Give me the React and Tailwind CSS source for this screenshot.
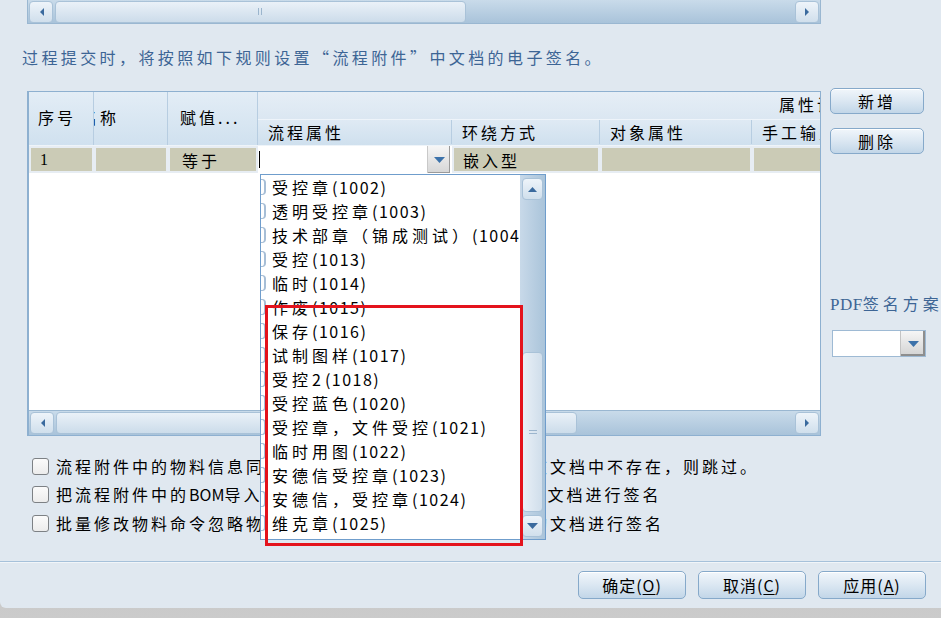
import React from "react";

const CJK = "font-['Noto_Sans_CJK_SC','Noto_Sans',sans-serif]";

const sbBtn =
  "flex shrink-0 items-center justify-center rounded-[4px] border border-[#a9c2d8] bg-linear-to-b from-[#eef4fa] to-[#d0dfec]";

function Arrow({ dir, color = "#3a6a9e" }) {
  if (dir === "left")
    return (
      <svg width="5" height="8" viewBox="0 0 5 8">
        <polygon points="5,0 5,8 1,4" fill={color} />
      </svg>
    );
  if (dir === "right")
    return (
      <svg width="5" height="8" viewBox="0 0 5 8">
        <polygon points="0,0 0,8 4,4" fill={color} />
      </svg>
    );
  if (dir === "up")
    return (
      <svg width="9" height="5" viewBox="0 0 9 5">
        <polygon points="0,5 9,5 4.5,0" fill={color} />
      </svg>
    );
  return (
    <svg width="11" height="6" viewBox="0 0 11 6">
      <polygon points="0,0 11,0 5.5,6" fill={color} />
    </svg>
  );
}

function HScroll({ thumb, className = "" }) {
  return (
    <div
      className={`flex h-[25px] items-center gap-[2px] border border-[#9ab7d1] bg-linear-to-b from-[#c9dbea] to-[#a9c3da] px-[1px] ${className}`}
    >
      <div className={`${sbBtn} h-[22px] w-[24px]`}>
        <Arrow dir="left" />
      </div>
      <div
        className={`flex h-[22px] items-center justify-center rounded-[4px] border border-[#a9c2d8] bg-linear-to-b from-[#eaf1f8] to-[#ccdcea] ${thumb}`}
      >
        <svg width="5" height="7" viewBox="0 0 5 7">
          <rect x="0" y="0" width="1" height="7" fill="#9bb5cd" />
          <rect x="3" y="0" width="1" height="7" fill="#9bb5cd" />
        </svg>
      </div>
      <div className="flex-1" />
      <div className={`${sbBtn} h-[22px] w-[24px]`}>
        <Arrow dir="right" />
      </div>
    </div>
  );
}

function Btn({ children, className = "" }) {
  return (
    <div
      className={`flex items-center justify-center rounded-[5px] border border-[#86a9ca] bg-linear-to-b from-[#f1f6fb] via-[#dbe7f2] to-[#c2d6e8] shadow-[inset_0_1px_0_#ffffff] ${className}`}
    >
      {children}
    </div>
  );
}

function Check({ children }) {
  return (
    <div className="flex h-[20px] items-center pl-[32px]">
      <span className="h-[17px] w-[17px] shrink-0 rounded-[3px] border border-[#7d8185] bg-linear-to-b from-[#fbfbfb] to-[#ececec]" />
      <span className="ml-[7px] whitespace-nowrap leading-[20px] tracking-[3px]">{children}</span>
    </div>
  );
}

const items = [
  ["受控章", "1002"],
  ["透明受控章", "1003"],
  ["技术部章（锦成测试）", "1004"],
  ["受控", "1013"],
  ["临时", "1014"],
  ["作废", "1015"],
  ["保存", "1016"],
  ["试制图样", "1017"],
  ["受控2", "1018"],
  ["受控蓝色", "1020"],
  ["受控章，文件受控", "1021"],
  ["临时用图", "1022"],
  ["安德信受控章", "1023"],
  ["安德信，受控章", "1024"],
  ["维克章", "1025"],
];

const hdr = "bg-linear-to-b from-[#e3edf6] to-[#d0e1ef]";

export default function App() {
  return (
    <div className={`relative h-[618px] w-[941px] overflow-hidden bg-linear-to-b from-[#a4a4a4] to-[#cbcbcb] text-[16px] text-black ${CJK}`}>
      <div className="flex h-[608px] flex-col rounded-bl-[6px] bg-[#e0e8f0]">
        {/* top scroll bar */}
        <div className="pl-[27px]">
          <HScroll thumb="w-[411px]" className="-mt-[1px] w-[794px]" />
        </div>

        <p className="mt-[23px] pl-[22px] leading-[20px] tracking-[3.4px] text-[#3d6595]">
          过程提交时，将按照如下规则设置“流程附件”中文档的电子签名。
        </p>

        {/* table + side buttons */}
        <div className="mt-[21px] flex h-[348px] items-start">
          <div className="ml-[27px] mt-[3px] flex h-[345px] w-[794px] flex-col border border-l-2 border-[#8eb0d0] bg-white">
            {/* header */}
            <div className="flex h-[54px] border-b border-[#eef4f9]">
              <div className={`flex w-[65px] items-center border-r border-[#b7cde1] pb-[3px] pl-[9px] tracking-[3px] ${hdr}`}>序号</div>
              <div className={`flex w-[74px] items-center overflow-hidden whitespace-nowrap border-r border-[#b7cde1] pb-[3px] ${hdr}`}>
                <span className="-ml-[13px] tracking-[3px]">名称</span>
              </div>
              <div className={`flex w-[90px] items-center border-r border-[#b7cde1] pb-[3px] pl-[12px] ${hdr}`}>
                <span className="tracking-[3px]">赋值</span>
                <span className="tracking-[3px]">...</span>
              </div>
              <div className="flex flex-1 flex-col overflow-hidden">
                <div className="flex h-[27px] items-center whitespace-nowrap bg-linear-to-b from-[#e6eef6] to-[#dbe7f2] pb-[4px] pl-[521px] tracking-[3px]">
                  属性设置
                </div>
                <div className="flex h-[27px] border-t border-[#eef4fa] bg-linear-to-b from-[#dfeaf4] to-[#cfe0ee] pb-[1px] whitespace-nowrap tracking-[3px]">
                  <div className="flex w-[194px] items-center border-r border-[#b7cde1] pl-[10px]">流程属性</div>
                  <div className="flex w-[148px] items-center border-r border-[#b7cde1] pl-[10px]">环绕方式</div>
                  <div className="flex w-[152px] items-center border-r border-[#b7cde1] pl-[10px]">对象属性</div>
                  <div className="flex flex-1 items-center overflow-hidden pl-[10px]">手工输入</div>
                </div>
              </div>
            </div>

            {/* data row */}
            <div className="flex h-[27px] bg-[#e7edf3]">
              <div className="w-[65px] p-[2px]">
                <div className="flex h-full items-center bg-[#cbcbb6] pl-[9px] font-['Liberation_Serif',serif]">1</div>
              </div>
              <div className="w-[74px] p-[2px]">
                <div className="h-full bg-[#cbcbb6]" />
              </div>
              <div className="w-[90px] p-[2px]">
                <div className="flex h-full items-center bg-[#cbcbb6] pl-[12px] tracking-[3px]">等于</div>
              </div>
              <div className="flex w-[194px] items-center bg-white">
                <span className="ml-[1px] h-[17px] w-[1px] bg-black" />
                <div className="flex-1" />
                <div className="flex h-full w-[23px] items-center justify-center border-l border-[#c9c9c9] bg-linear-to-b from-[#f6f6f6] to-[#d6d6d6] shadow-[inset_-1px_-1px_0_#9a9a9a]">
                  <Arrow dir="down" color="#3c72aa" />
                </div>
                <span className="w-[2px]" />
              </div>
              <div className="w-[148px] p-[2px]">
                <div className="flex h-full items-center bg-[#cbcbb6] pl-[9px] tracking-[3px]">嵌入型</div>
              </div>
              <div className="w-[152px] p-[2px]">
                <div className="h-full bg-[#cbcbb6]" />
              </div>
              <div className="flex-1 p-[2px] pr-0">
                <div className="h-full bg-[#cbcbb6]" />
              </div>
            </div>

            <div className="flex-1 bg-white" />

            <HScroll thumb="w-[521px]" className="border-x-0 border-b-0" />
          </div>

          {/* right column */}
          <div className="ml-[9px] flex flex-col">
            <Btn className="h-[26px] w-[94px] tracking-[3px]">新增</Btn>
            <Btn className="mt-[14px] h-[26px] w-[94px] tracking-[3px]">删除</Btn>
            <p className="mt-[139px] whitespace-nowrap leading-[20px] text-[#3d6595]">
              <span className="font-['Liberation_Serif',serif] text-[17px] tracking-[0.5px]">PDF</span>
              <span className="tracking-[4px]">签名方案</span>
            </p>
            <div className="ml-[2px] mt-[15px] flex h-[27px] w-[94px] border border-[#9ebad4] bg-white">
              <div className="flex-1" />
              <div className="flex w-[25px] items-center justify-center border-l border-[#c4c4c4] bg-linear-to-b from-[#f6f6f6] to-[#d3d3d3] shadow-[inset_-2px_-2px_0_#8e8e8e]">
                <Arrow dir="down" color="#3c72aa" />
              </div>
            </div>
          </div>
        </div>

        {/* checkboxes */}
        <div className="mt-[20px]">
          <Check>流程附件中的物料信息同步到文档属性中，如果物料属性在文档中不存在，则跳过。</Check>
          <div className="mt-[8px]">
            <Check>
              把流程附件中的<span className="tracking-normal">BOM</span>导入系统，并对流程附件中所有类型的文档进行签名
            </Check>
          </div>
          <div className="mt-[9px]">
            <Check>批量修改物料命令忽略物料属性的签名设置，直接对所有的文档进行签名</Check>
          </div>
        </div>

        {/* separator */}
        <div className="mt-[28px] h-[1px] bg-[#a6c1da]" />
        <div className="h-[1px] bg-[#f1f5f9]" />

        {/* dialog buttons */}
        <div className="mt-[8px] flex justify-end gap-[12px] pr-[15px]">
          <Btn className="h-[28px] w-[108px] tracking-[1px]">
            确定(<span className="underline underline-offset-2">O</span>)
          </Btn>
          <Btn className="h-[28px] w-[108px] tracking-[1px]">
            取消(<span className="underline underline-offset-2">C</span>)
          </Btn>
          <Btn className="h-[28px] w-[108px] tracking-[1px]">
            应用(<span className="underline underline-offset-2">A</span>)
          </Btn>
        </div>
      </div>

      {/* open dropdown list */}
      <div className="absolute left-[260px] top-[174px] flex h-[366px] w-[286px] border border-[#6f9dcc] bg-white">
        <div className="flex-1 overflow-hidden">
          {items.map(([name, code]) => (
            <div key={code} className="flex h-[24px] items-center whitespace-nowrap">
              <span className="h-[16px] w-[5px] shrink-0 rounded-r-[4px] border-y border-r-2 border-[#a7bed6]" />
              <span className="ml-[6px] tracking-[4px]">{name}</span>
              <span className="tracking-[1.5px]">({code})</span>
            </div>
          ))}
        </div>
        <div className="flex w-[25px] flex-col bg-linear-to-r from-[#c8d9e9] to-[#aac4da] px-[2px]">
          <div className={`${sbBtn} mt-[3px] h-[22px]`}>
            <Arrow dir="up" />
          </div>
          <div className="flex-1" />
          <div className="flex h-[160px] items-center justify-center rounded-[4px] border border-[#a9c2d8] bg-linear-to-r from-[#e9f0f7] to-[#d0deeb]">
            <svg width="8" height="5" viewBox="0 0 8 5">
              <rect x="0" y="0" width="8" height="1" fill="#9bb5cd" />
              <rect x="0" y="3" width="8" height="1" fill="#9bb5cd" />
            </svg>
          </div>
          <div className={`${sbBtn} mb-[2px] mt-[3px] h-[22px]`}>
            <Arrow dir="down" color="#3a6a9e" />
          </div>
        </div>
      </div>

      {/* red highlight annotation */}
      <div className="absolute left-[265px] top-[305px] h-[241px] w-[258px] border-[3px] border-[#e4131c]" />
    </div>
  );
}
